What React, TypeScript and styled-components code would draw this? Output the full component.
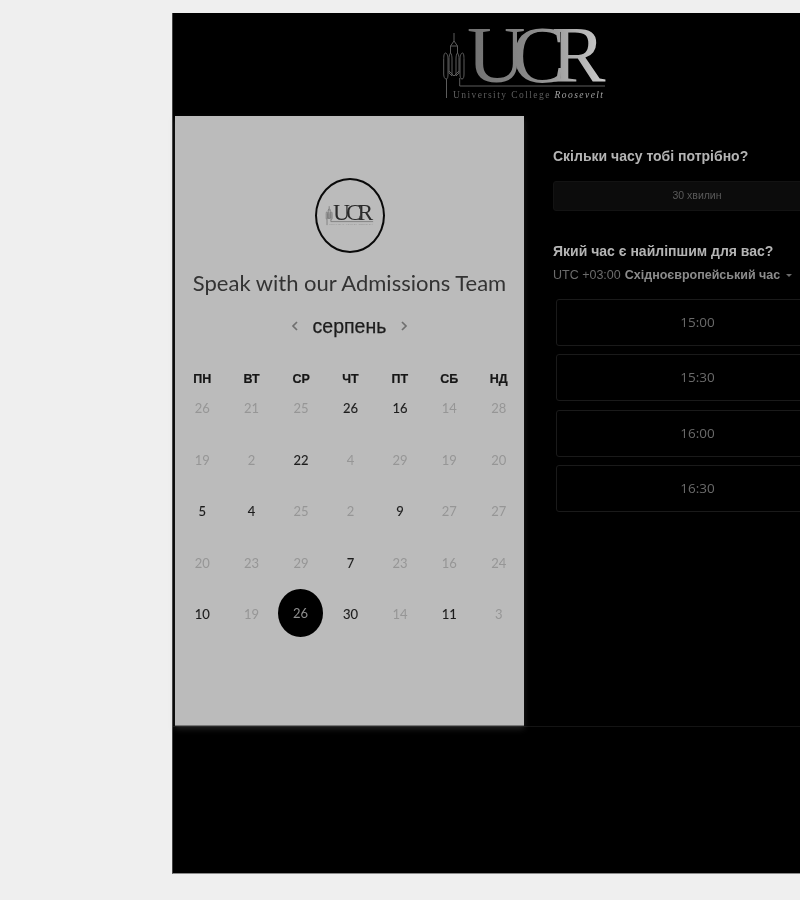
import styled, { createGlobalStyle } from "styled-components";

const GlobalStyle = createGlobalStyle`
  html, body {
    margin: 0;
    padding: 0;
    height: 900px;
    overflow: hidden;
    background: #efefef;
  }
  * { box-sizing: border-box; }
`;

const Page = styled.div`
  width: 800px;
  height: 900px;
  overflow: hidden;
  padding: 13px 0 0 172px;
`;

const Card = styled.div`
  width: 670px;
  height: 861px;
  background: #000;
  border-bottom: 1px solid #8a8a8a;
  border-left: 1px solid #444;
  display: flex;
  flex-direction: column;
  filter: blur(0.45px);
`;

const Header = styled.header`
  height: 103px;
  flex: none;
  padding: 13px 0 0 270px;
`;

const LogoSvg = styled.svg<{ $small?: boolean }>`
  display: block;
  overflow: visible;
  width: ${(p) => (p.$small ? "48px" : "165px")};
  height: ${(p) => (p.$small ? "23px" : "78px")};
  flex: none;
`;

const Body = styled.div`
  height: 611px;
  flex: none;
  display: flex;
  padding-left: 2px;
  border-bottom: 1px solid #141414;
`;

const LeftPanel = styled.section`
  width: 349px;
  height: 610px;
  flex: none;
  background: #bbb;
  border-bottom: 1px solid #777;
  box-shadow: 0 3px 6px rgba(120, 120, 120, 0.28);
  display: flex;
  flex-direction: column;
  align-items: center;
  padding-top: 62px;
`;

const Avatar = styled.div`
  width: 70px;
  height: 75px;
  border: 2.5px solid #0a0a0a;
  border-radius: 50%;
  display: flex;
  align-items: center;
  justify-content: center;
  flex: none;
`;

const Title = styled.h1`
  margin: 14px 0 0;
  font-family: Lato, sans-serif;
  font-weight: 400;
  font-size: 22px;
  line-height: 32px;
  color: #333;
  white-space: nowrap;
`;

const MonthRow = styled.div`
  margin-top: 13px;
  display: flex;
  align-items: center;
  gap: 14px;
  height: 28px;
`;

const MonthName = styled.div`
  font-family: "Liberation Sans", sans-serif;
  font-size: 19.5px;
  color: #1c1c1c;
  -webkit-text-stroke: 0.25px #1c1c1c;
`;

const Chevron = styled.svg`
  width: 8px;
  height: 12px;
  fill: none;
  stroke: #6f6f6f;
  stroke-width: 1.7;
`;

const WeekRow = styled.div`
  width: 346px;
  margin: 28px 0 0 2px;
  display: grid;
  grid-template-columns: repeat(7, 1fr);
  height: 22px;
`;

const WeekDay = styled.div`
  font-family: "Liberation Sans", sans-serif;
  font-weight: 700;
  font-size: 12.5px;
  line-height: 22px;
  text-align: center;
  color: #161616;
  -webkit-text-stroke: 0.2px #161616;
`;

const Calendar = styled.div`
  width: 346px;
  margin: 5px 0 0 2px;
  display: grid;
  grid-template-columns: repeat(7, 1fr);
  grid-auto-rows: 51.5px;
`;

const DayCell = styled.div`
  display: flex;
  align-items: center;
  justify-content: center;
  height: 26px;
`;

const Day = styled.span<{ $active?: boolean; $selected?: boolean }>`
  font-family: Lato, sans-serif;
  font-size: 13px;
  color: ${(p) => (p.$selected ? "#8f8f8f" : p.$active ? "#1c1c1c" : "#969696")};
  ${(p) => p.$active && "-webkit-text-stroke: 0.12px #1c1c1c;"}
  ${(p) =>
    p.$selected &&
    `
    width: 45px;
    height: 48px;
    flex: none;
    background: #000;
    border-radius: 50%;
    display: flex;
    align-items: center;
    justify-content: center;
    margin: -3px 0 0 -1px;
  `}
`;

const RightPanel = styled.section`
  flex: 1;
  padding: 31px 0 0 29px;
  display: flex;
  flex-direction: column;
  align-items: flex-start;
`;

const Question = styled.h2`
  margin: 0;
  font-family: "Liberation Sans", sans-serif;
  font-weight: 700;
  font-size: 14px;
  line-height: 18px;
  color: #b4b4b4;
  white-space: nowrap;
`;

const Duration = styled.div`
  margin-top: 16px;
  width: 288px;
  height: 30px;
  border-radius: 3px;
  background: #0c0c0c;
  border: 1px solid #131313;
  font-family: "Liberation Sans", sans-serif;
  font-size: 10.5px;
  line-height: 27px;
  text-align: center;
  color: #5a5a5a;
`;

const SecondQuestion = styled(Question)`
  margin-top: 31px;
`;

const Zone = styled.div`
  margin-top: 7px;
  display: flex;
  align-items: center;
  font-family: "Liberation Sans", sans-serif;
  font-size: 12.5px;
  line-height: 16px;
  color: #6b6b6b;
  white-space: nowrap;
  b {
    margin-left: 4px;
    color: #8c8c8c;
    font-weight: 700;
  }
`;

const Caret = styled.span`
  margin-left: 6px;
  width: 0;
  height: 0;
  border-left: 3px solid transparent;
  border-right: 3px solid transparent;
  border-top: 3px solid #6b6b6b;
`;

const Slots = styled.div`
  margin: 16px 0 0 3px;
  width: 283px;
  display: flex;
  flex-direction: column;
  gap: 8.3px;
`;

const Slot = styled.div`
  height: 47px;
  border: 1px solid #1a1a1a;
  border-radius: 3px;
  font-family: "Open Sans", sans-serif;
  font-size: 13.5px;
  line-height: 45px;
  text-align: center;
  color: #6a6a6a;
`;

const days: [number, boolean?][] = [
  [26], [21], [25], [26, true], [16, true], [14], [28],
  [19], [2], [22, true], [4], [29], [19], [20],
  [5, true], [4, true], [25], [2], [9, true], [27], [27],
  [20], [23], [29], [7, true], [23], [16], [24],
  [10, true], [19], [26], [30, true], [14], [11, true], [3],
];

const weekDays = ["ПН", "ВТ", "СР", "ЧТ", "ПТ", "СБ", "НД"];
const slots = ["15:00", "15:30", "16:00", "16:30"];

function Logo({ small }: { small?: boolean }) {
  const id = small ? "ucr-small" : "ucr-large";
  const line = small ? "#7c7c7c" : "#5c5c5c";
  return (
    <LogoSvg $small={small} viewBox="0 0 165 78">
      <defs>
        <linearGradient id={id} x1="0" x2="1" y1="0" y2="0">
          <stop offset="0" stopColor={small ? "#2a2a2a" : "#707070"} />
          <stop offset="0.5" stopColor={small ? "#2a2a2a" : "#8c8c8c"} />
          <stop offset="1" stopColor={small ? "#2a2a2a" : "#cbcbcb"} />
        </linearGradient>
      </defs>
      <g fill="none" stroke={line} strokeWidth={small ? 3 : 1}>
        <path d="M11 7v8l-3.500 5v7M11 15l3.500 5v7M7.500 20h7" />
        <path d="M2.500 27C1 27 .7 30 .7 34v14c0 3 1 5 2.500 5S5 51 5 48V33c0-3-1-6-2.500-6z" />
        <path d="M19.500 27c-1.500 0-2.500 3-2.500 6v15c0 3 .5 5 2 5s2-2 2-5V34c0-4-.2-7-1.500-7z" />
        <path d="M7.500 27c-1.500 2-1.500 4-1.500 6v14l3 3V33c0-3-.500-5-1.500-6zM14.500 27c1.500 2 1.500 4 1.500 6v14l-3 3V33c0-3 .500-5 1.500-6z" />
        <path d="M6 45l5 5 5-5M3.500 53v19M16.700 52v8H162" />
      </g>
      <text
        x="24"
        y="56"
        fontFamily="'Liberation Serif', serif"
        fontSize="81"
        letterSpacing="-14"
        fill={`url(#${id})`}
      >
        UCR
      </text>
      <text
        x="10"
        y="72"
        fontFamily="'Liberation Serif', serif"
        fontSize="9.500"
        textLength="150"
        fill={small ? "#8a8a8a" : "#5e5e5e"}
      >
        University College{" "}
        <tspan fontStyle="italic" fill={small ? "#8a8a8a" : "#a2a2a2"}>
          Roosevelt
        </tspan>
      </text>
    </LogoSvg>
  );
}

export default function App() {
  return (
    <>
      <GlobalStyle />
      <Page>
        <Card>
          <Header>
            <Logo />
          </Header>
          <Body>
            <LeftPanel>
              <Avatar>
                <Logo small />
              </Avatar>
              <Title>Speak with our Admissions Team</Title>
              <MonthRow>
                <Chevron viewBox="0 0 8 12">
                  <path d="M6 2 2 6l4 4" />
                </Chevron>
                <MonthName>серпень</MonthName>
                <Chevron viewBox="0 0 8 12">
                  <path d="m2 2 4 4-4 4" />
                </Chevron>
              </MonthRow>
              <WeekRow>
                {weekDays.map((d) => (
                  <WeekDay key={d}>{d}</WeekDay>
                ))}
              </WeekRow>
              <Calendar>
                {days.map(([n, active], i) => (
                  <DayCell key={i}>
                    <Day $active={active} $selected={i === 30}>
                      {n}
                    </Day>
                  </DayCell>
                ))}
              </Calendar>
            </LeftPanel>
            <RightPanel>
              <Question>Скільки часу тобі потрібно?</Question>
              <Duration>30 хвилин</Duration>
              <SecondQuestion>Який час є найліпшим для вас?</SecondQuestion>
              <Zone>
                UTC +03:00 <b>Східноєвропейський час</b>
                <Caret />
              </Zone>
              <Slots>
                {slots.map((s) => (
                  <Slot key={s}>{s}</Slot>
                ))}
              </Slots>
            </RightPanel>
          </Body>
        </Card>
      </Page>
    </>
  );
}
